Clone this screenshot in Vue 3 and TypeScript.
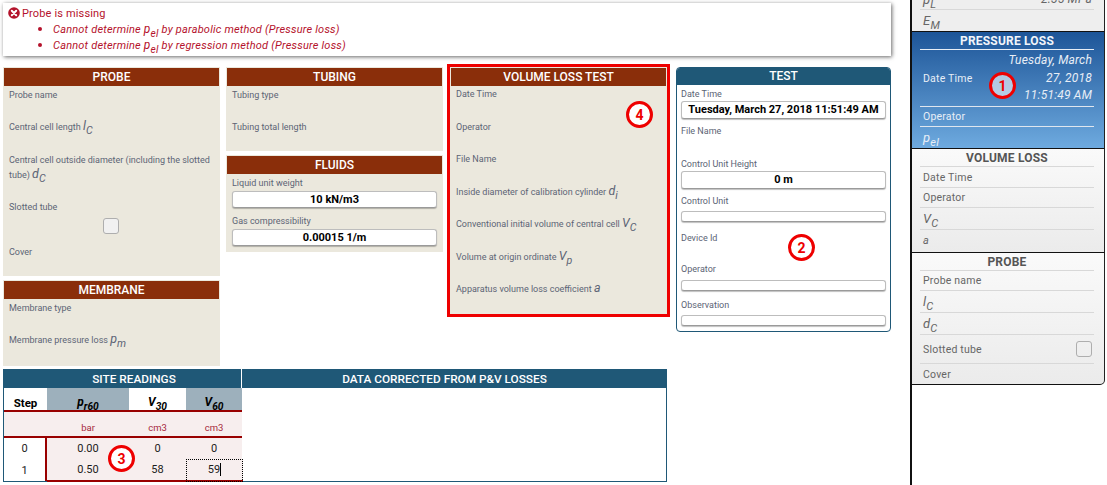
<script setup lang="ts">
interface Mark { n: number; cls: string }
const marks: Mark[] = [
  { n: 1, cls: 'm1' },
  { n: 2, cls: 'm2' },
  { n: 3, cls: 'm3' },
  { n: 4, cls: 'm4' },
]
</script>

<template>
  <div class="page">
    <main class="main">
      <section class="alert">
        <div class="alert-head">
          <svg class="err" viewBox="0 0 12 12" width="12" height="12">
            <circle cx="6" cy="6" r="5.8" fill="#b3132b" />
            <path d="M3.8 3.8l4.4 4.4M8.2 3.8l-4.4 4.4" stroke="#fff" stroke-width="2" stroke-linecap="round" />
          </svg>
          <span>Probe is missing</span>
        </div>
        <ul>
          <li>Cannot determine <i class="pel">p<sub>el</sub></i> by parabolic method (Pressure loss)</li>
          <li>Cannot determine <i class="pel">p<sub>el</sub></i> by regression method (Pressure loss)</li>
        </ul>
      </section>

      <div class="cols">
        <div class="col c1">
          <section class="panel h-probe">
            <h3>PROBE</h3>
            <div class="f"><label>Probe name</label></div>
            <div class="f"><label>Central cell length <i class="m">l<sub>C</sub></i></label></div>
            <div class="f"><label>Central cell outside diameter (including the slotted tube) <i class="m">d<sub>C</sub></i></label></div>
            <div class="f fc">
              <label>Slotted tube</label>
              <span class="check centered"></span>
            </div>
            <div class="f"><label>Cover</label></div>
          </section>
          <section class="panel h-membrane">
            <h3>MEMBRANE</h3>
            <div class="f"><label>Membrane type</label></div>
            <div class="f"><label>Membrane pressure loss <i class="m">p<sub>m</sub></i></label></div>
          </section>
        </div>

        <div class="col c2">
          <section class="panel h-tubing">
            <h3>TUBING</h3>
            <div class="f"><label>Tubing type</label></div>
            <div class="f"><label>Tubing total length</label></div>
          </section>
          <section class="panel h-fluids">
            <h3>FLUIDS</h3>
            <div class="fi"><label>Liquid unit weight</label><div class="inp">10 kN/m3</div></div>
            <div class="fi"><label>Gas compressibility</label><div class="inp">0.00015 1/m</div></div>
          </section>
        </div>

        <section class="panel c3">
          <h3>VOLUME LOSS TEST</h3>
          <div class="f"><label>Date Time</label></div>
          <div class="f"><label>Operator</label></div>
          <div class="f"><label>File Name</label></div>
          <div class="f"><label>Inside diameter of calibration cylinder <i class="m">d<sub>i</sub></i></label></div>
          <div class="f"><label>Conventional initial volume of central cell <i class="m">V<sub>C</sub></i></label></div>
          <div class="f"><label>Volume at origin ordinate <i class="m">V<sub>p</sub></i></label></div>
          <div class="f"><label>Apparatus volume loss coefficient <i class="m">a</i></label></div>
        </section>

        <section class="test">
          <h3>TEST</h3>
          <div class="t t1"><label>Date Time</label><div class="inp tall">Tuesday, March 27, 2018 11:51:49 AM</div></div>
          <div class="t t2"><label>File Name</label></div>
          <div class="t t3"><label>Control Unit Height</label><div class="inp tall">0 m</div></div>
          <div class="t t4"><label>Control Unit</label><div class="inp small"></div></div>
          <div class="t t5"><label>Device Id</label></div>
          <div class="t t6"><label>Operator</label><div class="inp small"></div></div>
          <div class="t t7"><label>Observation</label><div class="inp small"></div></div>
        </section>
      </div>

      <section class="table">
        <div class="table-head">
          <h3 class="th-a">SITE READINGS</h3>
          <h3 class="th-b">DATA CORRECTED FROM P&amp;V LOSSES</h3>
        </div>
        <div class="readings">
          <div class="g head white step-h">Step</div>
          <div class="g head grey"><i>p<sub>r60</sub></i></div>
          <div class="g head white"><i>V<sub>30</sub></i></div>
          <div class="g head grey"><i>V<sub>60</sub></i></div>

          <div class="g unit"></div>
          <div class="g unit">bar</div>
          <div class="g unit">cm3</div>
          <div class="g unit">cm3</div>

          <div class="g cell step r0">0</div>
          <div class="g cell r0">0.00</div>
          <div class="g cell r0">0</div>
          <div class="g cell r0">0</div>

          <div class="g cell step r1">1</div>
          <div class="g cell r1">0.50</div>
          <div class="g cell r1">58</div>
          <div class="g cell r1 focus"><span class="caret">59</span></div>
        </div>
      </section>
    </main>

    <aside class="side">
      <div class="sgroup top">
        <div class="srow r-pl"><i class="sm">p<sub>L</sub></i><i class="val">2.35 MPa</i></div>
        <div class="srow r-em"><i class="sm">E<sub>M</sub></i></div>
      </div>
      <div class="sgroup active">
        <h4>PRESSURE LOSS</h4>
        <div class="srow r-date">
          <span>Date Time</span>
          <i class="val wrapv">Tuesday, March 27, 2018 11:51:49 AM</i>
        </div>
        <div class="srow r-20"><span>Operator</span></div>
        <div class="srow r-21 last"><i class="sm">p<sub>el</sub></i></div>
      </div>
      <div class="sgroup vol">
        <h4>VOLUME LOSS</h4>
        <div class="srow r-21"><span>Date Time</span></div>
        <div class="srow r-20"><span>Operator</span></div>
        <div class="srow r-22"><i class="sm">V<sub>C</sub></i></div>
        <div class="srow r-22 last"><i class="sm sm-a">a</i></div>
      </div>
      <div class="sgroup end">
        <h4>PROBE</h4>
        <div class="srow r-20"><span>Probe name</span></div>
        <div class="srow r-22"><i class="sm">l<sub>C</sub></i></div>
        <div class="srow r-22"><i class="sm">d<sub>C</sub></i></div>
        <div class="srow r-29"><span>Slotted tube</span><span class="check side-check"></span></div>
        <div class="srow r-20 last"><span>Cover</span></div>
      </div>
    </aside>

    <span v-for="m in marks" :key="m.n" class="mark" :class="m.cls">{{ m.n }}</span>
  </div>
</template>

<style>
html, body { margin: 0; background: #fff; }
</style>

<style scoped>
.page {
  position: relative;
  display: flex;
  width: 1107px;
  height: 485px;
  overflow: hidden;
  font-family: Roboto, "Liberation Sans", sans-serif;
  font-size: 9px;
  color: #5c6475;
  background: #fff;
}
.main {
  width: 910px;
  flex: none;
  box-sizing: border-box;
  padding: 3px 0 0 3px;
}
h3, h4, ul { margin: 0; padding: 0; }
label { display: block; line-height: 15px; }
sub { font-size: 0.85em; line-height: 0; vertical-align: -0.35em; }

.alert {
  box-sizing: border-box;
  width: 888px;
  height: 53px;
  padding: 3px 5px;
  color: #b5122c;
  background: #fff;
  box-shadow: 1px 1px 4px rgba(0, 0, 0, 0.6);
}
.alert-head { display: flex; align-items: center; gap: 2px; height: 14px; font-size: 11px; letter-spacing: 0.15px; }
.alert ul { margin: 0; padding-left: 45px; font-size: 11px; font-style: italic; line-height: 16px; letter-spacing: 0.2px; }
.alert li { height: 16px; }
.alert li::marker { font-size: 14px; }
.pel { font-size: 12px; }

.cols { display: flex; align-items: flex-start; margin-top: 11px; }
.col { display: flex; flex-direction: column; width: 217px; flex: none; }
.c2 { margin-left: 6px; }
.col .panel + .panel { margin-top: 4px; }
.panel {
  box-sizing: border-box;
  padding: 1px;
  background: #ebe8dd;
}
.panel h3 {
  height: 18px;
  line-height: 18px;
  font-size: 12px;
  font-weight: 500;
  text-align: center;
  color: #fff;
  background: #8a2e0a;
}
.f { box-sizing: border-box; padding: 1.5px 5px 16px; }
.fc { padding-bottom: 0; height: 45px; }
.check {
  display: block;
  box-sizing: border-box;
  width: 16px;
  height: 16px;
  border: 1px solid #aeaeae;
  border-radius: 3px;
  background: #f1f1f1;
}
.centered { margin: 3px 0 0 94px; }
.side-check { margin-right: 2px; background: transparent; }
.m { font-size: 12.5px; line-height: 0; }
.h-probe { height: 209px; }
.h-membrane { height: 86px; }
.h-tubing { height: 84px; }
.h-fluids { height: 97px; }
.fi { padding: 1px 5px 0; }
.fi label { height: 16px; line-height: 17px; }
.fi + .fi { margin-top: 4px; }
.inp {
  box-sizing: border-box;
  height: 17px;
  line-height: 15px;
  font-size: 11px;
  font-weight: 700;
  color: #000;
  text-align: center;
  background: #fff;
  border: 1px solid #bdbdbd;
  border-bottom-color: #9a9a9a;
  border-radius: 3px;
  box-shadow: 0 1px 1px rgba(0, 0, 0, 0.25);
}
.inp.tall { height: 18px; line-height: 16px; }
.inp.small { height: 11px; margin-top: 3px; }

.c3 {
  width: 217px;
  height: 247px;
  margin-left: 7px;
  outline: 3px solid #ee0000;
  flex: none;
}
.c3 .f { padding-top: 1px; padding-bottom: 16.5px; }
.test {
  box-sizing: border-box;
  width: 215px;
  height: 265px;
  margin-left: 9px;
  border: 1px solid #1f5877;
  border-radius: 4px;
  flex: none;
  overflow: hidden;
}
.test h3 {
  height: 17px;
  line-height: 16px;
  font-size: 12px;
  font-weight: 500;
  text-align: center;
  color: #fff;
  background: #1f5877;
}
.t { padding: 0 4px; }
.t label { height: 14px; line-height: 14px; }
.t1 { padding-top: 2px; }
.t2 { margin-top: 5px; height: 33px; }
.t4 { margin-top: 5px; }
.t5 { margin-top: 9px; height: 31px; }
.t6 .inp.small { margin-top: 4px; }
.t7 { margin-top: 7px; }

.table {
  position: absolute;
  left: 3px;
  top: 369px;
  box-sizing: border-box;
  width: 664px;
  height: 113px;
  border: solid #1f5877;
  border-width: 0 1px 1px;
}
.table-head { display: flex; height: 19px; margin: 0 -1px; }
.table-head h3 {
  line-height: 20px;
  font-size: 11.8px;
  font-weight: 500;
  text-align: center;
  color: #fff;
  background: #1f5877;
}
.th-a { box-sizing: border-box; width: 238px; flex: none; padding-left: 24px; }
.th-b { box-sizing: border-box; flex: 1; margin-left: 1px; padding-right: 20px; }
.readings {
  display: grid;
  grid-template-columns: 43px 82px 57px 56px;
  grid-template-rows: 24px 26px 21px 22px;
  width: 238px;
}
.g { display: flex; align-items: center; justify-content: center; color: #000; box-sizing: border-box; }
.head { font-weight: 700; font-size: 11px; border-bottom: 2px solid #990000; }
.step-h { font-size: 11.5px; padding-top: 7px; }
.head i { font-size: 12px; padding-top: 5px; }
.white { background: #fff; }
.grey { background: #9db0bc; }
.unit {
  background: #f7eeee;
  color: #a6283c;
  font-size: 9.5px;
  border-bottom: 2px solid #990000;
  padding-top: 7px;
}
.cell { font-size: 11px; background: #f7eeee; color: #1b1b1b; }
.r1 { border-bottom: 2px solid #990000; margin-bottom: -1px; }
.step { background: #fff; border-bottom: 0; margin-bottom: 0; border-right: 2px solid #990000; }
.focus { outline: 1px dotted #000; outline-offset: -1px; margin-right: -1px; }
.caret { border-right: 1px solid #000; line-height: 13px; }

.side {
  box-sizing: border-box;
  width: 195px;
  height: 485px;
  flex: none;
  border-left: 2px solid #111;
  font-size: 10.5px;
  letter-spacing: 0.2px;
  color: #666;
}
.sgroup {
  box-sizing: border-box;
  width: 193px;
  padding: 0 10px 0 8px;
  background: linear-gradient(#fafafa, #ebebeb);
  border-right: 1px solid #222;
  border-bottom: 1px solid #111;
}
.top { height: 32px; background: #eeeeee; }
.active {
  height: 117px;
  color: #e8eef6;
  background: linear-gradient(#1d5598, #6eaadf);
}
.vol { height: 104px; }
.end { height: 132px; border-radius: 0 0 5px 0; }
.sgroup h4 {
  box-sizing: border-box;
  height: 18px;
  line-height: 18px;
  font-size: 12px;
  font-weight: 700;
  text-align: center;
  color: #555;
  border-bottom: 1px solid #d8d8d8;
}
.active h4 { color: #f2f5fa; border-bottom-color: #e8eef6; }
.srow {
  display: flex;
  align-items: center;
  justify-content: space-between;
  box-sizing: border-box;
  padding-left: 3px;
  border-bottom: 1px solid #d8d8d8;
}
.active .srow { border-bottom-color: #dfe6ef; }
.srow.last { border-bottom: 0; }
.sm { font-size: 13px; line-height: 16px; }
.sm-a { font-size: 11px; }
.val { font-size: 12px; text-align: right; padding-right: 2px; }
.r-pl { height: 10px; align-items: flex-end; }
.r-pl .sm { position: relative; top: -1px; }
.r-pl .val { position: relative; top: -3px; line-height: 14px; }
.r-em { height: 21px; border-bottom: 0; }
.r-date { height: 57px; }
.wrapv { width: 88px; line-height: 17.5px; padding-top: 1px; }
.r-20 { height: 20px; }
.r-21 { height: 21px; }
.r-22 { height: 22px; }
.r-29 { height: 29px; }

.mark {
  position: absolute;
  box-sizing: border-box;
  width: 27px;
  height: 27px;
  display: flex;
  align-items: center;
  justify-content: center;
  border: 3px solid #ee0000;
  border-radius: 50%;
  color: #ee0000;
  font-size: 14px;
  font-weight: 700;
  background: #fff;
}
.m1 { left: 989px; top: 72px; background: rgba(255, 255, 255, 0.6); }
.m2 { left: 788px; top: 234px; }
.m3 { left: 108px; top: 445px; }
.m4 { left: 626px; top: 101px; }
</style>
